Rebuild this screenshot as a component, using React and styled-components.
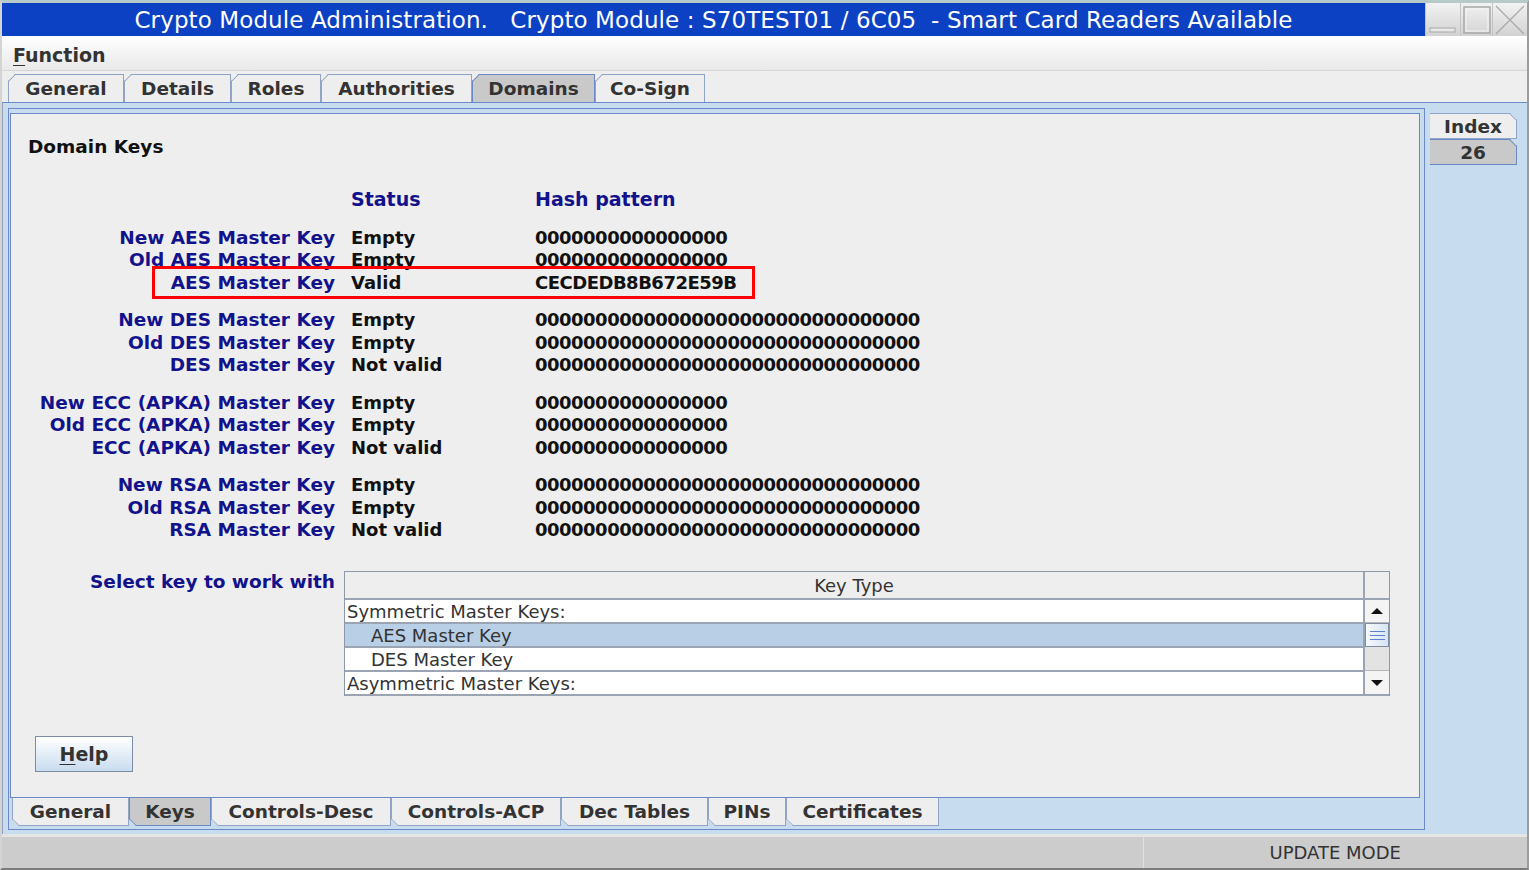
import React from 'react';
import styled, { createGlobalStyle } from 'styled-components';

const Global = createGlobalStyle`
  html, body { margin: 0; padding: 0; background: #d6d6d6; }
  body { font-family: "DejaVu Sans", "Liberation Sans", sans-serif; }
  * { box-sizing: border-box; }
`;

const Window = styled.div`
  width: 1529px;
  height: 870px;
  display: flex;
  flex-direction: column;
  background: #eeeeee;
  border-top: 3px solid #b7caca;
  border-left: 2px solid #d4d4d4;
  border-right: 2px solid #9c9c9c;
  border-bottom: 2px solid #7c7c7c;
  overflow: hidden;
`;

const TitleBar = styled.div`
  height: 33px;
  display: flex;
  flex: none;
`;

const TitleText = styled.div`
  flex: 1;
  background: #0b41c2;
  color: #ffffff;
  font: 23px "DejaVu Sans", sans-serif;
  letter-spacing: 0.1px;
  line-height: 34px;
  text-align: center;
  white-space: pre;
`;

const WinButtons = styled.div`
  display: flex;
  background: #d8d8d8;
`;

const WinButton = styled.div`
  width: ${p => p.$w || 34}px;
  height: 33px;
  display: flex;
  align-items: center;
  justify-content: center;
  background: linear-gradient(#f2f2f2, #d2d2d2);
  border-left: 1px solid #c4c4c4;
`;

const MenuBar = styled.div`
  height: 35px;
  flex: none;
  display: flex;
  align-items: center;
  padding: 3px 0 0 11px;
  background: linear-gradient(#ffffff, #e9e9e9);
  border-bottom: 1px solid #d6d6d6;
`;

const MenuItem = styled.div`
  font: bold 19px "DejaVu Sans", sans-serif;
  color: #333333;
  u { text-decoration-thickness: 1px; text-underline-offset: 3px; }
`;

const TopTabsRow = styled.div`
  height: 31px;
  flex: none;
  display: flex;
  align-items: flex-end;
  padding-left: 6px;
`;

const TabBase = styled.div`
  position: relative;
  flex: none;
  width: ${p => p.$w}px;
  height: 28px;
  display: flex;
  align-items: center;
  justify-content: center;
  font: bold 18.5px "DejaVu Sans", sans-serif;
  color: #333333;
  background: ${p => (p.$active ? '#c9c9c9' : '#eeeeee')};
  border: 1px solid ${p => (p.$active ? '#6a89c6' : '#90a4c6')};
`;

const TopTab = styled(TabBase)`
  border-bottom: none;
  clip-path: polygon(7px 0, 100% 0, 100% 100%, 0 100%, 0 7px);
  &::before {
    content: '';
    position: absolute;
    left: -1px;
    top: 6px;
    width: 10px;
    height: 1px;
    background: ${p => (p.$active ? '#6a89c6' : '#90a4c6')};
    transform-origin: 0 0;
    transform: rotate(-45deg);
  }
`;

const BottomTab = styled(TabBase)`
  border-top: none;
  height: 28px;
  clip-path: polygon(0 0, 100% 0, 100% 100%, 7px 100%, 0 calc(100% - 7px));
  &::before {
    content: '';
    position: absolute;
    left: -1px;
    bottom: 6px;
    width: 10px;
    height: 1px;
    background: ${p => (p.$active ? '#6a89c6' : '#90a4c6')};
    transform-origin: 0 0;
    transform: rotate(45deg);
  }
`;

const SideTab = styled(TabBase)`
  height: 26px;
  border-left: none;
  clip-path: polygon(0 0, calc(100% - 7px) 0, 100% 7px, 100% 100%, 0 100%);
  &::before {
    content: '';
    position: absolute;
    right: -1px;
    top: 6px;
    width: 10px;
    height: 1px;
    background: ${p => (p.$active ? '#6a89c6' : '#90a4c6')};
    transform-origin: 100% 0;
    transform: rotate(45deg);
  }
`;

const MainArea = styled.div`
  flex: 1;
  display: flex;
  background: #c8dcf0;
  border-top: 1px solid #6a89c6;
  border-left: 1px solid #8fa0b8;
  min-height: 0;
`;

const LeftPane = styled.div`
  width: 1417px;
  margin: 5px 0 4px 5px;
  display: flex;
  flex-direction: column;
  border: 1px solid #6a89c6;
  padding: 4px 4px 3px 1px;
`;

const InnerPanel = styled.div`
  flex: 1;
  background: #eeeeee;
  border: 1px solid #6a89c6;
  display: flex;
  flex-direction: column;
`;

const BottomTabsRow = styled.div`
  display: flex;
  padding-left: 2px;
`;

const RightColumn = styled.div`
  flex: 1;
  display: flex;
  flex-direction: column;
  padding: 10px 10px 0 5px;
`;

const SectionTitle = styled.div`
  margin: 21px 0 0 17px;
  font: bold 18.5px "DejaVu Sans", sans-serif;
  line-height: 24px;
  color: #111111;
`;

const KeyGrid = styled.div`
  position: relative;
  display: grid;
  grid-template-columns: 340px 184px 1fr;
  grid-auto-rows: ${p => (p.$header ? '24px' : '22.5px')};
  margin-top: ${p => p.$mt}px;
  align-items: center;
`;

const Label = styled.div`
  text-align: right;
  padding-right: 16px;
  font: bold 18.5px "DejaVu Sans", sans-serif;
  color: #12128c;
  white-space: nowrap;
`;

const HeadCell = styled.div`
  font: bold 19px "DejaVu Sans", sans-serif;
  color: #12128c;
  white-space: nowrap;
`;

const Status = styled.div`
  font: bold 18px "DejaVu Sans", sans-serif;
  color: #111111;
  white-space: nowrap;
`;

const Hash = styled.div`
  font: bold 18px "DejaVu Sans", sans-serif;
  letter-spacing: -0.5px;
  color: #111111;
  white-space: nowrap;
`;

const Highlight = styled.div`
  position: absolute;
  left: 141px;
  top: 40px;
  width: 603px;
  height: 33px;
  border: 3px solid #ff0000;
  pointer-events: none;
`;

const SelectRow = styled.div`
  display: flex;
  margin-top: 30px;
  align-items: flex-start;
`;

const SelectLabel = styled(Label)`
  width: 324px;
  padding-right: 0;
  line-height: 22px;
  margin-right: 9px;
`;

const Table = styled.div`
  width: 1046px;
  display: grid;
  grid-template-columns: 1fr 24px;
  border: 1px solid #8d99aa;
  border-bottom: none;
  background: #eeeeee;
`;

const TableHeader = styled.div`
  height: 28px;
  display: flex;
  align-items: center;
  justify-content: center;
  font: 18px "DejaVu Sans", sans-serif;
  color: #333333;
  border-bottom: 2px solid #9aa4b2;
  border-right: 2px solid #9aa4b2;
`;

const HeaderCorner = styled.div`
  height: 28px;
  border-bottom: 2px solid #9aa4b2;
`;

const Rows = styled.div`
  display: flex;
  flex-direction: column;
  border-right: 2px solid #9aa4b2;
`;

const Row = styled.div`
  height: 24px;
  display: flex;
  align-items: center;
  padding-left: ${p => (p.$indent ? 26 : 2)}px;
  font: 18px "DejaVu Sans", sans-serif;
  color: #333333;
  background: ${p => (p.$selected ? '#b8cfe5' : '#ffffff')};
  border-bottom: 2px solid #9aa4b2;
  white-space: nowrap;
`;

const ScrollBar = styled.div`
  display: flex;
  flex-direction: column;
  background: #e3e3e3;
  border-bottom: 2px solid #9aa4b2;
`;

const ScrollBtn = styled.div`
  height: ${p => p.$h}px;
  display: flex;
  align-items: center;
  justify-content: center;
  background: #f4f4f4;
  border-top: ${p => (p.$down ? '1px solid #b8b8b8' : 'none')};
  border-bottom: ${p => (p.$down ? 'none' : '1px solid #b8b8b8')};
`;

const Thumb = styled.div`
  height: 24px;
  display: flex;
  flex-direction: column;
  align-items: center;
  justify-content: center;
  gap: 3px;
  background: linear-gradient(90deg, #f6f9fd, #d6e4f2);
  border: 1px solid #7d8ca2;
  span {
    display: block;
    width: 15px;
    height: 1px;
    background: #5f7fd0;
  }
`;

const Track = styled.div`
  flex: 1;
  background: #e3e3e3;
`;

const HelpButton = styled.button`
  margin: 40px 0 0 24px;
  width: 98px;
  height: 36px;
  background: linear-gradient(#ffffff, #c9dcef);
  border: 1px solid #7d8ca2;
  font: bold 19px "DejaVu Sans", sans-serif;
  color: #333333;
  padding: 0;
  u { text-decoration-thickness: 1px; text-underline-offset: 3px; }
`;

const StatusBar = styled.div`
  height: 34px;
  flex: none;
  display: flex;
  background: #cccccc;
  border-top: 3px solid #e4e4e4;
`;

const StatusCell = styled.div`
  flex: ${p => (p.$grow ? 1 : 'none')};
  width: ${p => (p.$w ? `${p.$w}px` : 'auto')};
  border-left: ${p => (p.$divider ? '1px solid #e0e0e0' : 'none')};
  display: flex;
  align-items: center;
  justify-content: flex-end;
  padding-right: 126px;
  font: 18px "DejaVu Sans", sans-serif;
  color: #333333;
`;

const topTabs = [
  ['General', 116], ['Details', 107], ['Roles', 90], ['Authorities', 151], ['Domains', 123, true], ['Co-Sign', 110],
];
const bottomTabs = [
  ['General', 117], ['Keys', 82, true], ['Controls-Desc', 180], ['Controls-ACP', 170], ['Dec Tables', 147], ['PINs', 78], ['Certificates', 153],
];

const Z16 = '0000000000000000';
const Z32 = Z16 + Z16;

const groups = [
  [
    ['New AES Master Key', 'Empty', Z16],
    ['Old AES Master Key', 'Empty', Z16],
    ['AES Master Key', 'Valid', 'CECDEDB8B672E59B'],
  ],
  [
    ['New DES Master Key', 'Empty', Z32],
    ['Old DES Master Key', 'Empty', Z32],
    ['DES Master Key', 'Not valid', Z32],
  ],
  [
    ['New ECC (APKA) Master Key', 'Empty', Z16],
    ['Old ECC (APKA) Master Key', 'Empty', Z16],
    ['ECC (APKA) Master Key', 'Not valid', Z16],
  ],
  [
    ['New RSA Master Key', 'Empty', Z32],
    ['Old RSA Master Key', 'Empty', Z32],
    ['RSA Master Key', 'Not valid', Z32],
  ],
];

export default function App() {
  return (
    <>
      <Global />
      <Window>
        <TitleBar>
          <TitleText>{'Crypto Module Administration.   Crypto Module : S70TEST01 / 6C05  - Smart Card Readers Available'}</TitleText>
          <WinButtons>
            <WinButton $w={35}>
              <svg width="30" height="30" viewBox="0 0 30 30">
                <rect x="2" y="23" width="25" height="4" fill="#e8e8e8" stroke="#a8a8a8" />
              </svg>
            </WinButton>
            <WinButton $w={32}>
              <svg width="30" height="30" viewBox="0 0 30 30">
                <rect x="2" y="2" width="26" height="26" fill="none" stroke="#a8a8a8" strokeWidth="1.5" />
                <rect x="4" y="4" width="22" height="22" fill="none" stroke="#f4f4f4" strokeWidth="1" />
              </svg>
            </WinButton>
            <WinButton $w={35}>
              <svg width="32" height="30" viewBox="0 0 32 30">
                <path d="M2 1 L30 29 M30 1 L2 29" stroke="#a8a8a8" strokeWidth="1.2" />
              </svg>
            </WinButton>
          </WinButtons>
        </TitleBar>

        <MenuBar>
          <MenuItem><u>F</u>unction</MenuItem>
        </MenuBar>

        <TopTabsRow>
          {topTabs.map(([t, w, a]) => (
            <TopTab key={t} $w={w} $active={a}>{t}</TopTab>
          ))}
        </TopTabsRow>

        <MainArea>
          <LeftPane>
            <InnerPanel>
              <SectionTitle>Domain Keys</SectionTitle>
              <KeyGrid $header $mt={28}>
                <div />
                <HeadCell>Status</HeadCell>
                <HeadCell>Hash pattern</HeadCell>
              </KeyGrid>
              {groups.map((g, gi) => (
                <KeyGrid key={gi} $mt={15}>
                  {g.map(([l, s, h]) => (
                    <React.Fragment key={l}>
                      <Label>{l}</Label>
                      <Status>{s}</Status>
                      <Hash>{h}</Hash>
                    </React.Fragment>
                  ))}
                  {gi === 0 && <Highlight />}
                </KeyGrid>
              ))}
              <SelectRow>
                <SelectLabel>Select key to work with</SelectLabel>
                <Table>
                  <TableHeader>Key Type</TableHeader>
                  <HeaderCorner />
                  <Rows>
                    <Row>Symmetric Master Keys:</Row>
                    <Row $indent $selected>AES Master Key</Row>
                    <Row $indent>DES Master Key</Row>
                    <Row>Asymmetric Master Keys:</Row>
                  </Rows>
                  <ScrollBar>
                    <ScrollBtn $h={23}>
                      <svg width="12" height="8" viewBox="0 0 12 8"><path d="M0 7 L6 1 L12 7 Z" fill="#111" /></svg>
                    </ScrollBtn>
                    <Thumb><span /><span /><span /></Thumb>
                    <Track />
                    <ScrollBtn $h={24} $down>
                      <svg width="12" height="8" viewBox="0 0 12 8"><path d="M0 1 L6 7 L12 1 Z" fill="#111" /></svg>
                    </ScrollBtn>
                  </ScrollBar>
                </Table>
              </SelectRow>
              <HelpButton><u>H</u>elp</HelpButton>
            </InnerPanel>
            <BottomTabsRow>
              {bottomTabs.map(([t, w, a]) => (
                <BottomTab key={t} $w={w} $active={a}>{t}</BottomTab>
              ))}
            </BottomTabsRow>
          </LeftPane>
          <RightColumn>
            <SideTab $w={87}>Index</SideTab>
            <SideTab $w={87} $active>26</SideTab>
          </RightColumn>
        </MainArea>

        <StatusBar>
          <StatusCell $w={1141} />
          <StatusCell $grow $divider>UPDATE MODE</StatusCell>
        </StatusBar>
      </Window>
    </>
  );
}
